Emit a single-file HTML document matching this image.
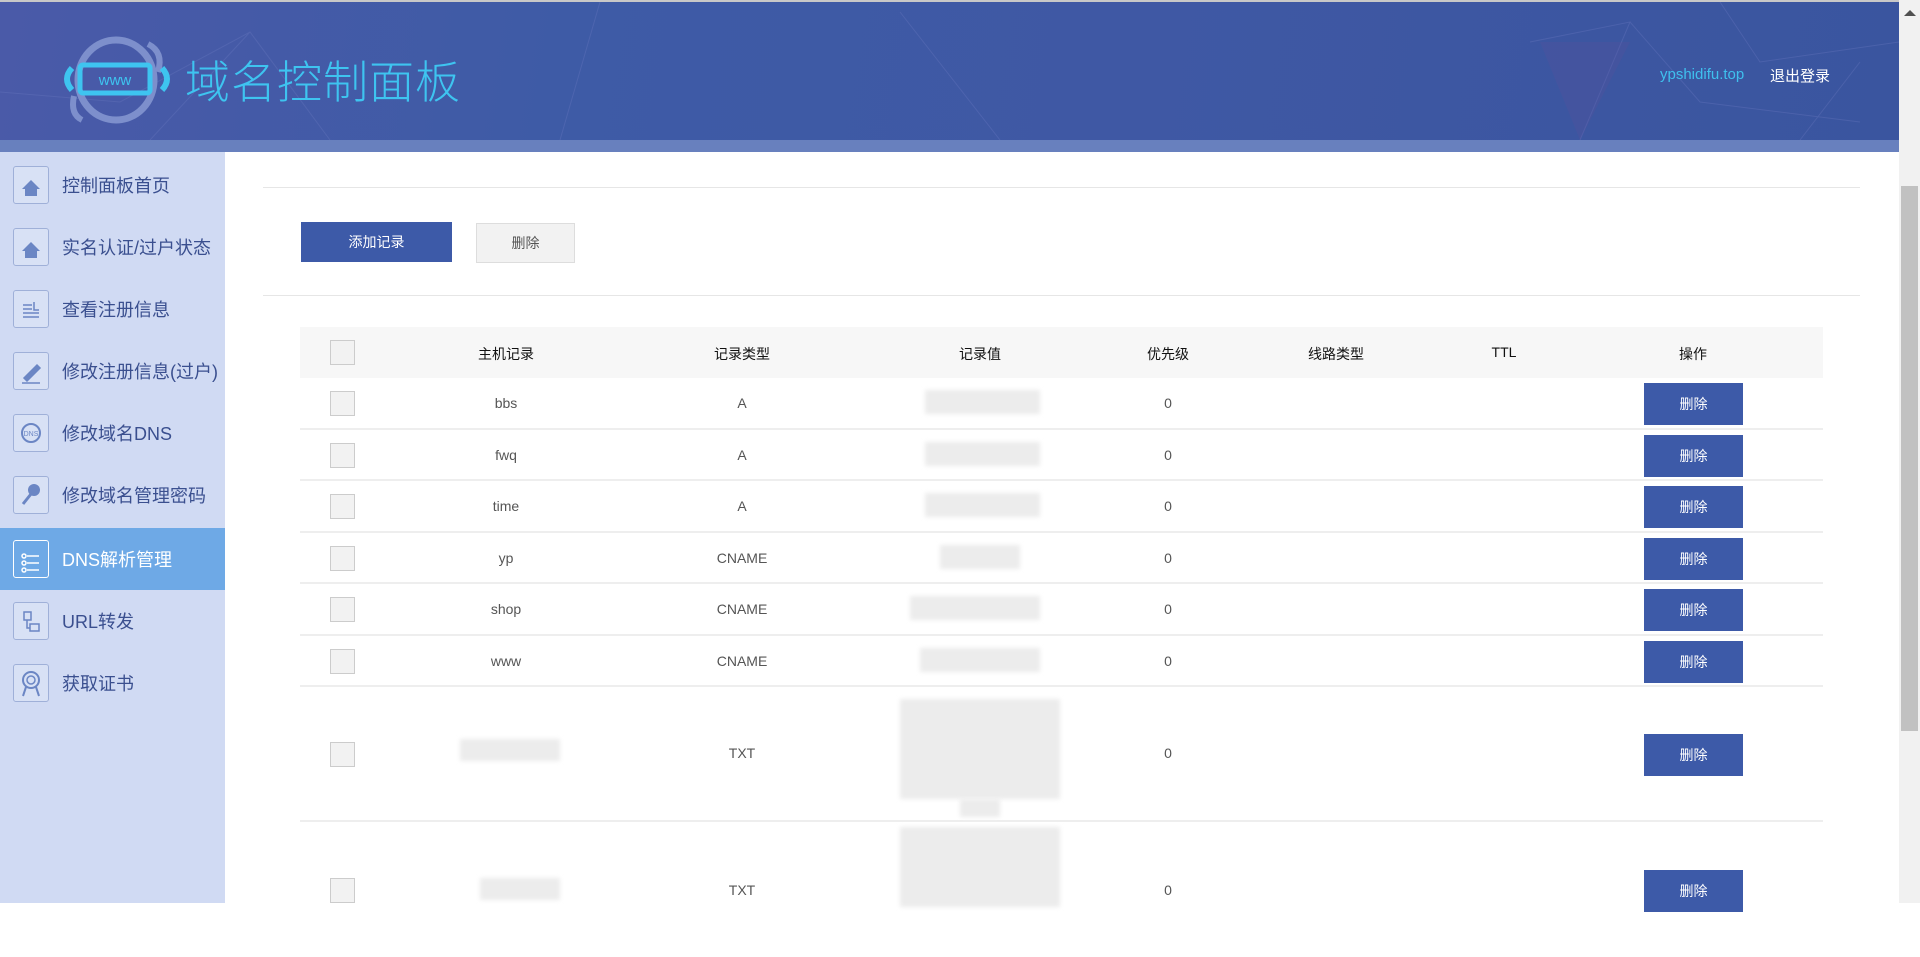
<!DOCTYPE html>
<html><head><meta charset="utf-8"><style>
*{margin:0;padding:0;box-sizing:border-box}
body{width:1920px;height:903px;overflow:hidden;background:#fff;font-family:"Liberation Sans","Noto Sans CJK SC",sans-serif;position:relative}
.top{position:absolute;left:0;top:0;width:1899px;height:2px;background:#c8c8c8}
.hdr{position:absolute;left:0;top:2px;width:1899px;height:138px;background:linear-gradient(100deg,#4a5aa8 0%,#3e5ba6 30%,#3f58a4 60%,#3a559f 100%);overflow:hidden}
.strip{position:absolute;left:0;top:140px;width:1899px;height:12px;background:#6880be}
.title{position:absolute;left:185px;top:44px;font-size:45px;color:#3ec4f0;letter-spacing:1px;font-family:"Noto Sans CJK SC",sans-serif;font-weight:300}
.user{position:absolute;left:1660px;top:64px;font-size:15px;color:#3fc0ee}
.out{position:absolute;left:1770px;top:63px;font-size:15px;color:#fff}
.side{position:absolute;left:0;top:152px;width:225px;height:751px;background:#d0daf3}
.it{position:absolute;left:0;width:225px;height:62px;font-size:18px;color:#3a4f8f}
.it .ic{position:absolute;left:13px;top:12px;width:36px;height:38px;border:1px solid #9fb0d8;border-radius:3px;background:#d8e1f5}
.it span{position:absolute;left:62px;top:18px;white-space:nowrap}
.it.act{background:#6ea9e6;color:#fff}
.it.act .ic{background:#6ea9e6;border-color:#fff}
.hr{position:absolute;left:263px;width:1597px;height:1px;background:#e6e6e6}
.btn1{position:absolute;left:301px;top:222px;width:151px;height:40px;background:#3d5aa8;color:#fff;font-size:14px;text-align:center;line-height:40px}
.btn2{position:absolute;left:476px;top:223px;width:99px;height:40px;background:#f2f2f2;border:1px solid #ddd;color:#555;font-size:14px;text-align:center;line-height:38px}
.th{position:absolute;left:300px;top:327px;width:1523px;height:51px;background:#f7f7f7}
.c{position:absolute;font-size:14px;color:#555;transform:translateX(-50%);white-space:nowrap}
.th .c{color:#111}
.row{position:absolute;left:300px;width:1523px;border-bottom:2px solid #eee}
.cb{position:absolute;left:30px;width:25px;height:25px;background:#f2f2f2;border:1px solid #ccc}
.del{position:absolute;left:1344px;width:99px;height:42px;background:#3d5aa8;color:#fff;font-size:14px;text-align:center;line-height:42px}
.blur{position:absolute;background:#ececec;filter:blur(2px)}
.sb{position:absolute;left:1899px;top:0;width:21px;height:903px;background:#f1f1f1}
.th2{position:absolute;left:1901px;top:186px;width:17px;height:545px;background:#c1c1c1}
</style></head><body>
<div class="top"></div>
<div class="hdr">
<svg width="1899" height="138" style="position:absolute;left:0;top:0" stroke="#6a78c0" stroke-opacity=".35" fill="none">
<path d="M0 90 L120 100 L250 30 L330 138 M150 138 L250 30 M600 0 L560 138 M900 10 L1000 138 M1530 40 L1630 20 L1580 138 M1630 20 L1700 100 L1860 120 M1720 0 L1760 60 L1899 40 M1800 138 L1860 60"/>
<path d="M1540 40 L1630 40 L1580 138 Z" fill="#5a4f9a" fill-opacity=".25" stroke="none"/>
</svg>
<svg width="110" height="100" viewBox="0 0 110 100" style="position:absolute;left:60px;top:30px">
<ellipse cx="56" cy="48" rx="38" ry="40" fill="none" stroke="#7d8fcc" stroke-width="7"/>
<path d="M88 12 Q104 20 98 40" fill="none" stroke="#7d8fcc" stroke-width="6"/>
<path d="M22 88 Q10 82 14 64" fill="none" stroke="#7d8fcc" stroke-width="6"/>
<path d="M12 36 Q2 47 12 58 M102 36 Q112 47 102 58" fill="none" stroke="#3ec4f0" stroke-width="6"/>
<rect x="20" y="33" width="70" height="28" rx="3" fill="none" stroke="#3ec4f0" stroke-width="5"/>
<text x="55" y="53" font-size="15" fill="#3ec4f0" text-anchor="middle" font-family="Liberation Sans">www</text>
</svg>
<div class="title">域名控制面板</div>
<div class="user">ypshidifu.top</div>
<div class="out">退出登录</div>
</div>
<div class="strip"></div>
<div class="side">
<div class="it" style="top:2px"><div class="ic"></div><span>控制面板首页</span></div>
<div class="it" style="top:64px"><div class="ic"></div><span>实名认证/过户状态</span></div>
<div class="it" style="top:126px"><div class="ic"></div><span>查看注册信息</span></div>
<div class="it" style="top:188px"><div class="ic"></div><span>修改注册信息(过户)</span></div>
<div class="it" style="top:250px"><div class="ic"></div><span>修改域名DNS</span></div>
<div class="it" style="top:312px"><div class="ic"></div><span>修改域名管理密码</span></div>
<div class="it act" style="top:376px"><div class="ic"></div><span>DNS解析管理</span></div>
<div class="it" style="top:438px"><div class="ic"></div><span>URL转发</span></div>
<div class="it" style="top:500px"><div class="ic"></div><span>获取证书</span></div>
</div>
<svg width="225" height="600" style="position:absolute;left:0;top:152px" fill="#6b86c4" stroke="#6b86c4">
<path d="M22 37 L31 28 L40 37 L37 37 L37 44 L25 44 L25 37Z" stroke="none"/>
<path d="M22 99 L31 90 L40 99 L37 99 L37 106 L25 106 L25 99Z" stroke="none"/>
<path d="M23 153 H32 M23 157 H32 M23 161 H39 M23 165 H39 M34 150 V158 H39" fill="none" stroke-width="1.5"/>
<path d="M24 226 L37 213 L40 216 L27 229 Z M22 231 H40" stroke-width="1.5"/>
<circle cx="31" cy="281" r="9" fill="none" stroke-width="2"/><text x="31" y="284" font-size="7" fill="#6b86c4" stroke="none" text-anchor="middle" font-family="Liberation Sans">DNS</text>
<circle cx="34" cy="338" r="6" stroke="none"/><path d="M31 342 L23 352" fill="none" stroke-width="3"/>
<g stroke="#fff" fill="none" stroke-width="1.5"><circle cx="24" cy="404" r="2"/><circle cx="24" cy="411" r="2"/><circle cx="24" cy="418" r="2"/><path d="M27 404 H39 M27 411 H39 M27 418 H39"/></g>
<path d="M24 460 h7 v8 h-7z M30 472 h9 v7 h-9z M27 468 v8 h3" fill="none" stroke-width="1.5"/>
<circle cx="31" cy="528" r="8" fill="none" stroke-width="2"/><circle cx="31" cy="528" r="4" fill="none" stroke-width="1.5"/><path d="M26 535 L23 544 M36 535 L39 544" fill="none" stroke-width="2"/>
</svg>
<div class="hr" style="top:187px"></div>
<div class="btn1">添加记录</div>
<div class="btn2">删除</div>
<div class="hr" style="top:295px"></div>
<div class="th"><div class="cb" style="top:13px"></div>
<div class="c" style="left:206px;top:17px">主机记录</div><div class="c" style="left:442px;top:17px">记录类型</div><div class="c" style="left:680px;top:17px">记录值</div><div class="c" style="left:868px;top:17px">优先级</div><div class="c" style="left:1036px;top:17px">线路类型</div><div class="c" style="left:1204px;top:17px">TTL</div><div class="c" style="left:1393px;top:17px">操作</div></div>

<div class="row" style="top:378px;height:52px"><div class="cb" style="top:13px"></div><div class="c" style="left:206px;top:17px">bbs</div><div class="c" style="left:442px;top:17px">A</div><div class="blur" style="left:625px;top:12px;width:115px;height:24px"></div><div class="c" style="left:868px;top:17px">0</div><div class="del" style="top:5px">删除</div></div>
<div class="row" style="top:430px;height:51px"><div class="cb" style="top:13px"></div><div class="c" style="left:206px;top:17px">fwq</div><div class="c" style="left:442px;top:17px">A</div><div class="blur" style="left:625px;top:12px;width:115px;height:24px"></div><div class="c" style="left:868px;top:17px">0</div><div class="del" style="top:5px">删除</div></div>
<div class="row" style="top:481px;height:52px"><div class="cb" style="top:13px"></div><div class="c" style="left:206px;top:17px">time</div><div class="c" style="left:442px;top:17px">A</div><div class="blur" style="left:625px;top:12px;width:115px;height:24px"></div><div class="c" style="left:868px;top:17px">0</div><div class="del" style="top:5px">删除</div></div>
<div class="row" style="top:533px;height:51px"><div class="cb" style="top:13px"></div><div class="c" style="left:206px;top:17px">yp</div><div class="c" style="left:442px;top:17px">CNAME</div><div class="blur" style="left:640px;top:12px;width:80px;height:24px"></div><div class="c" style="left:868px;top:17px">0</div><div class="del" style="top:5px">删除</div></div>
<div class="row" style="top:584px;height:52px"><div class="cb" style="top:13px"></div><div class="c" style="left:206px;top:17px">shop</div><div class="c" style="left:442px;top:17px">CNAME</div><div class="blur" style="left:610px;top:12px;width:130px;height:24px"></div><div class="c" style="left:868px;top:17px">0</div><div class="del" style="top:5px">删除</div></div>
<div class="row" style="top:636px;height:51px"><div class="cb" style="top:13px"></div><div class="c" style="left:206px;top:17px">www</div><div class="c" style="left:442px;top:17px">CNAME</div><div class="blur" style="left:620px;top:12px;width:120px;height:24px"></div><div class="c" style="left:868px;top:17px">0</div><div class="del" style="top:5px">删除</div></div>
<div class="row" style="top:687px;height:135px"><div class="cb" style="top:55px"></div><div class="blur" style="left:160px;top:52px;width:100px;height:22px"></div><div class="c" style="left:442px;top:58px">TXT</div><div class="blur" style="left:600px;top:12px;width:160px;height:100px"></div><div class="blur" style="left:660px;top:112px;width:40px;height:18px"></div><div class="c" style="left:868px;top:58px">0</div><div class="del" style="top:47px">删除</div></div>
<div class="row" style="top:822px;height:135px;border:none"><div class="cb" style="top:56px"></div><div class="blur" style="left:180px;top:56px;width:80px;height:22px"></div><div class="c" style="left:442px;top:60px">TXT</div><div class="blur" style="left:600px;top:5px;width:160px;height:80px"></div><div class="c" style="left:868px;top:60px">0</div><div class="del" style="top:48px">删除</div></div>
<div class="sb"></div><div class="th2"></div>
<div style="position:absolute;left:1904px;top:10px;width:0;height:0;border-left:6px solid transparent;border-right:6px solid transparent;border-bottom:6px solid #505050"></div>
</body></html>
